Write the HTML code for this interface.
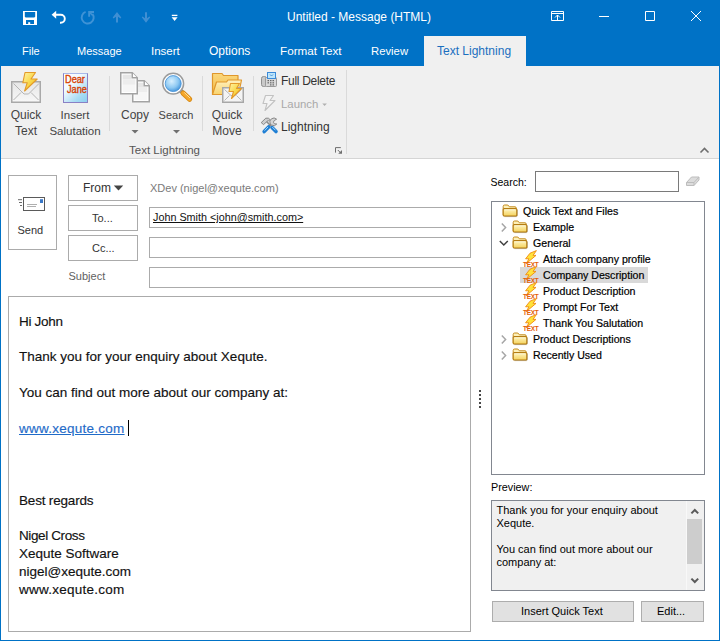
<!DOCTYPE html>
<html><head><meta charset="utf-8">
<style>
*{box-sizing:border-box;margin:0;padding:0}
html,body{width:720px;height:641px;overflow:hidden;background:#fff}
body{position:relative;font-family:"Liberation Sans",sans-serif;color:#000}
.a{position:absolute;white-space:pre}
svg{position:absolute;overflow:visible}
#title{left:0;top:0;width:720px;height:66px;background:#0072c6}
#win{left:0;top:66px;width:720px;height:575px;border:1px solid #0072c6;border-top:0}
#ribbon{left:1px;top:66px;width:718px;height:93px;background:#f0f0f0;border-bottom:1px solid #d5d5d5}
#acttab{left:424px;top:36px;width:102px;height:30px;background:#f0f0f0}
.tab{font-size:12px;color:#fff;line-height:12px}
.rb{font-size:12px;color:#444;line-height:16px;text-align:center}
.sm{font-size:12px;color:#333;line-height:12px}
.sep{position:absolute;width:1px;background:#dadada}
.bx{position:absolute;border:1px solid #ababab;background:#fff}
.t11{font-size:11px;line-height:11px}
.tree{font-size:10.6px;line-height:11px;color:#000;-webkit-text-stroke:0.2px #000}
.body{font-size:13.5px;line-height:13.5px;color:#111;-webkit-text-stroke:0.15px #111}
</style></head><body>
<div class="a" id="title"></div>
<div class="a" id="win"></div>
<div class="a" id="ribbon"></div>
<div class="a" id="acttab"></div>

<!-- title bar -->
<svg width="720" height="36" style="left:0;top:0">
 <rect x="23" y="11" width="14" height="14" fill="#fff"/>
 <path d="M24.8 12.1h10.4v4.6l-0.9 0.9h-8.6l-0.9-0.9z" fill="#0072c6"/>
 <rect x="26" y="20" width="8" height="4" fill="#0072c6"/>
 <rect x="28.2" y="22.2" width="2" height="2" fill="#fff"/>
 <path d="M54 14.7h6.8a4 4 0 0 1 0 8h-0.8" fill="none" stroke="#fff" stroke-width="1.9"/>
 <path d="M51.6 14.7l4.6-4v8z" fill="#fff"/>
 <path d="M85.6 11.9A6 6 0 1 0 92.4 13.8" fill="none" stroke="#3f93d6" stroke-width="1.9"/>
 <path d="M88.2 11h5.8v1.9h-3.9v3.9h-1.9z" fill="#3f93d6"/><path d="M89.5 12.3l3 3" stroke="#3f93d6" stroke-width="1.6"/>
 <path d="M117 22.6v-9" stroke="#3f8fd3" stroke-width="2"/>
 <path d="M112.7 17.6l4.3-5.5 4.3 5.5-0.8 0.8-3.5-2.5-3.5 2.5z" fill="#3f8fd3"/>
 <path d="M146 12.2v9" stroke="#3f8fd3" stroke-width="2"/>
 <path d="M141.8 17.2l4.2 5.5 4.2-5.5-0.8-0.8-3.4 2.5-3.4-2.5z" fill="#3f8fd3"/>
 <path d="M171.8 15.4h5.6" stroke="#fff" stroke-width="1.3"/>
 <path d="M171.6 17.3h6l-3 3.7z" fill="#fff"/>
 <g fill="none" stroke="#fff" stroke-width="1">
  <path d="M551.5 11.5h12v9h-12z"/>
  <path d="M551.5 13.5h12"/>
  <path d="M557.5 20.5v-5.5M555 17.5l2.5-2.5 2.5 2.5"/>
  <path d="M599 16.5h10"/>
  <path d="M645.5 11.5h9v9h-9z"/>
  <path d="M691 11l10 10M701 11l-10 10"/>
 </g>
</svg>
<div class="a tab" style="left:287px;top:11px;font-size:12px">Untitled - Message (HTML)</div>

<!-- tabs -->
<div class="a tab" style="left:22px;top:45px;font-size:11px">File</div>
<div class="a tab" style="left:77px;top:45px;font-size:11px">Message</div>
<div class="a tab" style="left:151px;top:45px;font-size:11.5px">Insert</div>
<div class="a tab" style="left:209px;top:45px">Options</div>
<div class="a tab" style="left:280px;top:45px;font-size:11.7px">Format Text</div>
<div class="a tab" style="left:371px;top:45px;font-size:11.3px">Review</div>
<div class="a tab" style="left:437px;top:45px;color:#1a6fbf">Text Lightning</div>

<!-- ribbon -->
<svg width="720" height="100" style="left:0;top:0">
 <defs>
  <linearGradient id="bolt" x1="0" y1="0" x2="1" y2="1"><stop offset="0" stop-color="#fff3a8"/><stop offset="0.5" stop-color="#f9d84a"/><stop offset="1" stop-color="#f2b51c"/></linearGradient>
  <linearGradient id="card" x1="0" y1="0" x2="1" y2="1"><stop offset="0" stop-color="#ffffff"/><stop offset="0.35" stop-color="#eef7fd"/><stop offset="1" stop-color="#8fd0f0"/></linearGradient>
  <linearGradient id="fold" x1="0" y1="0" x2="0" y2="1"><stop offset="0" stop-color="#fbd77c"/><stop offset="1" stop-color="#f3bd4a"/></linearGradient><linearGradient id="fold2" x1="0" y1="0" x2="0" y2="1"><stop offset="0" stop-color="#fff1c0"/><stop offset="1" stop-color="#f9d36c"/></linearGradient>
  <radialGradient id="lens" cx="0.4" cy="0.35" r="0.7"><stop offset="0" stop-color="#d8f0ff"/><stop offset="0.6" stop-color="#8cc8f2"/><stop offset="1" stop-color="#3d8fd8"/></radialGradient>
  <linearGradient id="env" x1="0" y1="0" x2="0" y2="1"><stop offset="0" stop-color="#e6e6e6"/><stop offset="1" stop-color="#f8f8f8"/></linearGradient>
 </defs>
</svg>
<!-- Quick Text icon -->
<svg width="40" height="40" style="left:0;top:66px">
 <rect x="11.75" y="15.75" width="28.5" height="20.5" fill="url(#env)" stroke="#a9a9a9" stroke-width="1.5"/>
 <path d="M13.5 17.5l10.5 10.5h4.5l10.5-10.5M13.5 34l7.5-7.5M38.5 34l-7.5-7.5" fill="none" stroke="#b5b5b5" stroke-width="1"/>
 <path d="M25 6.5h10.5l-4.5 6.5h6.2l-12.6 12 2.6-8.2h-4.4z" fill="url(#bolt)" stroke="#e39a2a" stroke-width="1.1" stroke-linejoin="round"/>
</svg>
<!-- Dear Jane -->
<div class="a" style="left:63px;top:73px;width:25px;height:30px;border:1px solid #8a80c4;border-top-color:#a9b8e8;background:linear-gradient(135deg,#fff 0%,#f2f9fe 35%,#a8dcf4 75%,#8ccff0 100%)"></div>
<div class="a" style="left:64.8px;top:74px;font-size:10.7px;line-height:10.7px;color:#d94000;-webkit-text-stroke:0.35px #d94000;transform:scaleX(0.86);transform-origin:0 0">Dear</div>
<div class="a" style="left:66.8px;top:84px;font-size:10.7px;line-height:10.7px;color:#d94000;-webkit-text-stroke:0.35px #d94000;transform:scaleX(0.86);transform-origin:0 0">Jane</div>
<!-- Copy -->
<svg width="40" height="40" style="left:110px;top:66px">
 <path d="M22.75 14.75h11.5l5 5v16h-16.5z" fill="#fff" stroke="#a3a3a3" stroke-width="1.5"/>
 <rect x="28" y="16.6" width="5.6" height="4.4" fill="#e6e6e6"/><rect x="28" y="21" width="9.4" height="5.5" fill="#ededed"/><rect x="24.6" y="26.5" width="12.8" height="7.6" fill="#f6f6f6"/>
 <path d="M34.25 14.75v5h5" fill="#fff" stroke="#a3a3a3" stroke-width="1.5"/>
 <path d="M10.75 6.75h11.5l5 5v16h-16.5z" fill="#fff" stroke="#a3a3a3" stroke-width="1.5"/>
 <rect x="12.6" y="8.6" width="8.6" height="4.6" fill="#e6e6e6"/><rect x="12.6" y="13.2" width="12.8" height="5.6" fill="#ededed"/><rect x="12.6" y="18.8" width="12.8" height="7.2" fill="#f6f6f6"/>
 <path d="M22.25 6.75v5h5" fill="#fff" stroke="#a3a3a3" stroke-width="1.5"/>
</svg>
<!-- Search -->
<svg width="40" height="40" style="left:157px;top:66px">
 <path d="M22.5 23.5l4 3.8" stroke="#8e8e8e" stroke-width="4"/>
 <path d="M26 27l6.6 6.2" stroke="#d88a14" stroke-width="5.2" stroke-linecap="round"/>
 <path d="M26 27l6.6 6.2" stroke="#f6a72a" stroke-width="3.4" stroke-linecap="round"/>
 <path d="M27.6 26.8l5 4.8" stroke="#ffe3a0" stroke-width="1" stroke-linecap="round"/>
 <circle cx="16.2" cy="17.6" r="10.4" fill="#fff" stroke="#9b9b9b" stroke-width="1.5"/>
 <circle cx="16.2" cy="17.6" r="8" fill="url(#lens)" stroke="#3f8ed6" stroke-width="0.8"/>
</svg>
<!-- Quick Move -->
<svg width="40" height="40" style="left:207px;top:66px">
 <path d="M5.5 7.5h9.5l1.5 2h14.5v19h-25.5z" fill="url(#fold)" stroke="#e0972c" stroke-width="1.2" stroke-linejoin="round"/>
 <path d="M5.5 28.5l4-12.5h10l1.5-2h13.5l-3 14.5z" fill="url(#fold2)" stroke="#e0972c" stroke-width="1.2" stroke-linejoin="round"/>
 <rect x="15.75" y="21.75" width="20.5" height="14.5" fill="#f4f4f4" stroke="#a7a7a7" stroke-width="1.5"/>
 <path d="M17.5 23.5l6.5 6h4l6.5-6M17.5 34.5l5-5M34.5 34.5l-5-5" fill="none" stroke="#b8b8b8" stroke-width="1"/>
 <path d="M23.5 17.5h9l-3 5h5l-10 10 2-7h-4.5z" fill="url(#bolt)" stroke="#e39a2a" stroke-width="1.1" stroke-linejoin="round"/>
</svg>
<!-- Full Delete icon -->
<svg width="20" height="20" style="left:259px;top:70px">
 <rect x="2.5" y="6.5" width="5" height="10" rx="2" fill="#c9c9c9" stroke="#8f8f8f" stroke-width="1"/>
 <rect x="6.5" y="7.5" width="11" height="9" rx="1" fill="#d8d8d8" stroke="#9a9a9a" stroke-width="1"/>
 <rect x="8.5" y="2.5" width="8" height="6" fill="#bfe6fb" stroke="#3c8ad8" stroke-width="1"/>
 <path d="M11 4.5l1.5 1.5 1.5-1.5" stroke="#3c8ad8" stroke-width="0.9" fill="none"/>
 <g fill="#6a6a6a"><rect x="8.5" y="10" width="1.5" height="1.2"/><rect x="11" y="10" width="1.5" height="1.2"/><rect x="13.5" y="10" width="1.5" height="1.2"/><rect x="8.5" y="12.2" width="1.5" height="1.2"/><rect x="11" y="12.2" width="1.5" height="1.2"/><rect x="13.5" y="12.2" width="1.5" height="1.2"/><rect x="11" y="14.3" width="1.5" height="1.2"/><rect x="13.5" y="14.3" width="1.5" height="1.2"/></g>
</svg>
<!-- Launch icon (disabled) -->
<svg width="20" height="20" style="left:259px;top:93px">
 <path d="M6.5 2.5h8l-3.5 5h5l-10 10 2-7h-4z" fill="#f4f4f4" stroke="#c2c2c2" stroke-width="1.1" stroke-linejoin="round"/>
</svg>
<!-- Lightning tools icon -->
<svg width="720" height="160" style="left:0;top:0">
 <path d="M266.5 121.5l6 6M272.5 122.5l-5 5" stroke="#8a8a8a" stroke-width="1.6"/>
 <path d="M261.2 122.6l4.6-4.4h2.6l1.6 1.4-1.4 1.4h-1.2l-3.8 3.6z" fill="#cfcfcf" stroke="#7e7e7e" stroke-width="0.9" stroke-linejoin="round"/>
 <path d="M276.6 119.2a4 4 0 0 0-6.4 4.6l1.2 1.2a4 4 0 0 0 5.4-1l-2.4-0.2-1-1.6 0.8-1.6z" fill="#d6d6d6" stroke="#7e7e7e" stroke-width="0.9" stroke-linejoin="round"/>
 <path d="M264.2 131.6l4.4-4.6" stroke="#1f7fd4" stroke-width="3.6" stroke-linecap="round"/>
 <path d="M272 127.6l4 4" stroke="#1f7fd4" stroke-width="3.6" stroke-linecap="round"/>
 <path d="M264.8 130.4l3-3.2M272.6 127.4l2.6 2.6" stroke="#a6d8fb" stroke-width="1" stroke-linecap="round"/>
</svg>
<!-- ribbon labels -->
<div class="a rb" style="left:6px;top:107px;width:40px">Quick
Text</div>
<div class="a rb" style="left:45px;top:107px;width:60px;font-size:11.5px">Insert
Salutation</div>
<div class="a rb" style="left:115px;top:107px;width:40px">Copy</div>
<div class="a rb" style="left:156px;top:107px;width:40px;font-size:11px">Search</div>
<div class="a rb" style="left:207px;top:107px;width:40px">Quick
Move</div>
<svg width="720" height="160" style="left:0;top:0">
 <path d="M131.5 130h7l-3.5 3.5z" fill="#707070"/>
 <path d="M173 130h7l-3.5 3.5z" fill="#707070"/>
 <path d="M322.3 103.5h4.6l-2.3 2.4z" fill="#b0b0b0"/>
 <path d="M335.5 152.6v-5h5.3" fill="none" stroke="#6e6e6e" stroke-width="1"/><path d="M342 150v3.8h-3.8z" fill="#6e6e6e"/><path d="M337.8 150l3 3" stroke="#6e6e6e" stroke-width="1"/>
 <path d="M700.5 152.5l4-4 4 4" fill="none" stroke="#6e6e6e" stroke-width="1.6"/>
</svg>
<div class="sep" style="left:109px;top:76px;height:55px"></div>
<div class="sep" style="left:202px;top:76px;height:55px"></div>
<div class="sep" style="left:253px;top:76px;height:55px"></div>
<div class="sep" style="left:346px;top:70px;height:84px"></div>
<div class="a sm" style="left:281px;top:74.5px;letter-spacing:-0.3px">Full Delete</div>
<div class="a sm" style="left:281px;top:97.5px;color:#a9a9a9;font-size:11.4px">Launch</div>
<div class="a sm" style="left:281px;top:120.5px">Lightning</div>
<div class="a" style="left:129px;top:145px;font-size:11.5px;line-height:11.5px;color:#555">Text Lightning</div>


<!-- compose -->
<!-- Send -->
<div class="bx" style="left:8px;top:175px;width:49px;height:75px"></div>
<svg width="60" height="40" style="left:0;top:190px">
 <rect x="23.5" y="7.5" width="21" height="13" fill="#fff" stroke="#5a5a5a" stroke-width="1"/>
 <rect x="40" y="9.2" width="3" height="3.8" fill="#3a78c8"/>
 <path d="M27 14.5h10M27 16.5h9" stroke="#9a9a9a" stroke-width="0.8"/>
 <path d="M18 9.7h4M19 12.5h3M20 15.5h2" stroke="#6a6a6a" stroke-width="1"/>
</svg>
<div class="a" style="left:17.5px;top:225px;font-size:11px;line-height:11px;color:#333">Send</div>
<!-- From/To/Cc buttons -->
<div class="bx" style="left:68px;top:175px;width:70px;height:26px"></div>
<div class="bx" style="left:68px;top:205px;width:70px;height:26px"></div>
<div class="bx" style="left:68px;top:235px;width:70px;height:26px"></div>
<div class="a" style="left:83px;top:182px;font-size:12px;line-height:12px;color:#333">From</div>
<svg width="20" height="10" style="left:112px;top:185px"><path d="M1.8 0.6h9.4l-4.7 4.9z" fill="#444"/></svg>
<div class="a" style="left:92px;top:213px;font-size:11px;line-height:11px;color:#333">To...</div>
<div class="a" style="left:92px;top:243px;font-size:11px;line-height:11px;color:#333">Cc...</div>
<div class="a" style="left:68.5px;top:271px;font-size:11px;line-height:11px;color:#5f5f5f">Subject</div>
<div class="a" style="left:150px;top:183px;font-size:11px;line-height:11px;color:#7a7a7a">XDev (nigel@xequte.com)</div>
<!-- fields -->
<div class="bx" style="left:149px;top:207px;width:322px;height:21px"></div>
<div class="bx" style="left:149px;top:237px;width:322px;height:21px"></div>
<div class="bx" style="left:149px;top:267px;width:322px;height:21px"></div>
<div class="a" style="left:153px;top:212px;font-size:10.8px;line-height:11px;color:#111;text-decoration:underline">John Smith &lt;john@smith.com&gt;</div>
<!-- body -->
<div class="bx" style="left:8px;top:296px;width:463px;height:336px"></div>
<div class="a body" style="left:19px;top:315px;letter-spacing:-0.3px">Hi John</div>
<div class="a body" style="left:19px;top:350px">Thank you for your enquiry about Xequte.</div>
<div class="a body" style="left:19px;top:385.5px">You can find out more about our company at:</div>
<div class="a body" style="left:19px;top:421.5px;color:#1f6bc8;-webkit-text-stroke-color:#1f6bc8;text-decoration:underline;letter-spacing:0.25px">www.xequte.com</div>
<div class="a" style="left:128px;top:420px;width:1px;height:16px;background:#000"></div>
<div class="a body" style="left:19px;top:494px;letter-spacing:-0.18px">Best regards</div>
<div class="a body" style="left:19px;top:529px;letter-spacing:-0.38px">Nigel Cross</div>
<div class="a body" style="left:19px;top:547px">Xequte Software</div>
<div class="a body" style="left:19px;top:565px">nigel@xequte.com</div>
<div class="a body" style="left:19px;top:582.5px;letter-spacing:0.25px">www.xequte.com</div>
<!-- splitter dots -->
<svg width="10" height="30" style="left:475px;top:385px">
 <g fill="#474747"><rect x="4" y="5" width="2" height="2"/><rect x="4" y="9" width="2" height="2"/><rect x="4" y="13" width="2" height="2"/><rect x="4" y="17" width="2" height="2"/><rect x="4" y="21" width="2" height="2"/></g>
</svg>


<!-- right pane -->
<div class="a" style="left:490.5px;top:177px;font-size:10.5px;line-height:10.5px;color:#000">Search:</div>
<div class="bx" style="left:535px;top:171px;width:144px;height:21px;border-color:#7a7a7a"></div>
<svg width="20" height="16" style="left:684px;top:173px">
 <path d="M2.5 9.5l5-5.5h7.5v3l-5 5.5H2.5z" fill="#dcdcdc" stroke="#bdbdbd" stroke-width="1" stroke-linejoin="round"/>
 <path d="M2.5 9.5h7.5l5-5.5M10 9.5v3" fill="none" stroke="#bdbdbd" stroke-width="1"/>
</svg>
<div class="bx" style="left:491px;top:201px;width:214px;height:274px;border-color:#828790"></div>
<div class="a" style="left:520px;top:267px;width:128px;height:16px;background:#d9d9d9"></div>
<svg width="220" height="170" style="left:491px;top:201px">
 <defs>
  <linearGradient id="fy" x1="0" y1="0" x2="0" y2="1"><stop offset="0" stop-color="#fff6c4"/><stop offset="1" stop-color="#f4d25c"/></linearGradient>
  <g id="fo"><path d="M1.2 11V2.4q0-1.4 1.4-1.4h3.2l1.6 1.8h5.6q1.2 0 1.2 1.2V11z" fill="#fdf0b8" stroke="#c48a1c" stroke-width="1"/><rect x="1.2" y="4.6" width="13.6" height="7.4" rx="1" fill="url(#fy)" stroke="#b57d12" stroke-width="1.1"/><path d="M2.4 12.6h12.4M15.4 5.6v6.6" stroke="#8a6a2a" stroke-width="0.8" opacity="0.55"/><path d="M2.4 5.8h11" stroke="#fffbe0" stroke-width="0.8"/></g>
  <g id="qt"><path d="M8 2.2l6.4-2.6-3.4 4.8h3l-10 8.4 3-5H3.6z" fill="#ffe23a" stroke="#f08a10" stroke-width="0.9" stroke-linejoin="round"/><text x="1" y="16" font-family="Liberation Sans" font-size="6.5" font-weight="bold" fill="#e4600a" letter-spacing="-0.3">TEXT</text></g>
 </defs>
 <use href="#fo" x="11" y="3"/>
 <path d="M10.8 22.6l3.8 3.9-3.8 3.9" fill="none" stroke="#a6a6a6" stroke-width="1.5"/>
 <use href="#fo" x="21" y="19"/>
 <path d="M8.8 40l4 4 4-4" fill="none" stroke="#404040" stroke-width="1.5"/>
 <use href="#fo" x="21" y="35"/>
 <use href="#qt" x="31" y="50"/>
 <use href="#qt" x="31" y="66"/>
 <use href="#qt" x="31" y="82"/>
 <use href="#qt" x="31" y="98"/>
 <use href="#qt" x="31" y="114"/>
 <path d="M10.8 134.6l3.8 3.9-3.8 3.9" fill="none" stroke="#a6a6a6" stroke-width="1.5"/>
 <use href="#fo" x="21" y="131"/>
 <path d="M10.8 150.6l3.8 3.9-3.8 3.9" fill="none" stroke="#a6a6a6" stroke-width="1.5"/>
 <use href="#fo" x="21" y="147"/>
</svg>
<div class="a tree" style="left:523px;top:206px">Quick Text and Files</div>
<div class="a tree" style="left:533px;top:222px">Example</div>
<div class="a tree" style="left:533px;top:238px">General</div>
<div class="a tree" style="left:543px;top:254px">Attach company profile</div>
<div class="a tree" style="left:543px;top:270px">Company Description</div>
<div class="a tree" style="left:543px;top:286px">Product Description</div>
<div class="a tree" style="left:543px;top:302px">Prompt For Text</div>
<div class="a tree" style="left:543px;top:318px">Thank You Salutation</div>
<div class="a tree" style="left:533px;top:334px">Product Descriptions</div>
<div class="a tree" style="left:533px;top:350px">Recently Used</div>
<div class="a" style="left:491px;top:482px;font-size:10.8px;line-height:10.8px;color:#000">Preview:</div>
<div class="bx" style="left:491px;top:500px;width:214px;height:91px;border-color:#828790;background:#f0f0f0"></div>
<div class="a" style="left:686px;top:501px;width:17px;height:89px;background:#f0f0f0;border-left:1px solid #f8f8f8"></div>
<div class="a" style="left:687px;top:519px;width:15px;height:45px;background:#cdcdcd"></div>
<svg width="20" height="90" style="left:686px;top:500px">
 <path d="M5.4 13.4l3.4-3.4 3.4 3.4" fill="none" stroke="#5a5a5a" stroke-width="2"/>
 <path d="M5.4 78.6l3.4 3.4 3.4-3.4" fill="none" stroke="#5a5a5a" stroke-width="2"/>
</svg>
<div class="a" style="left:496.5px;top:504px;font-size:11px;line-height:13px;color:#000">Thank you for your enquiry about
Xequte.

You can find out more about our
company at:</div>
<div class="bx" style="left:492px;top:601px;width:142px;height:21px;background:#e1e1e1;border-color:#adadad"></div>
<div class="bx" style="left:641px;top:601px;width:63px;height:21px;background:#e1e1e1;border-color:#adadad"></div>
<div class="a" style="left:521px;top:606px;font-size:11px;line-height:11px;color:#000">Insert Quick Text</div>
<div class="a" style="left:657px;top:606px;font-size:11px;line-height:11px;color:#000">Edit...</div>

</body></html>
